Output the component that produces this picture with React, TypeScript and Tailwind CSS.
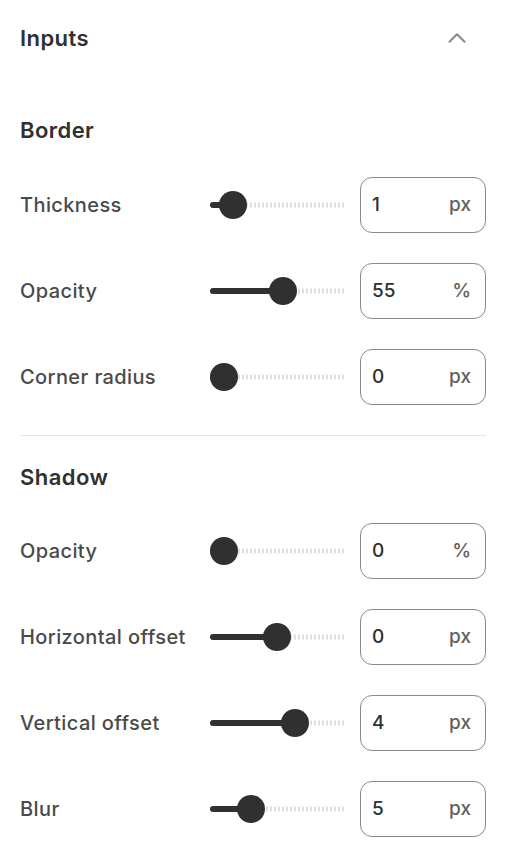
import { ChevronUp } from "lucide-react";

type Row = { label: string; value: string; unit: string; pos: number };

const border: Row[] = [
  { label: "Thickness", value: "1", unit: "px", pos: 1 / 12 },
  { label: "Opacity", value: "55", unit: "%", pos: 0.55 },
  { label: "Corner radius", value: "0", unit: "px", pos: 0 },
];

const shadow: Row[] = [
  { label: "Opacity", value: "0", unit: "%", pos: 0 },
  { label: "Horizontal offset", value: "0", unit: "px", pos: 0.49 },
  { label: "Vertical offset", value: "4", unit: "px", pos: 0.66 },
  { label: "Blur", value: "5", unit: "px", pos: 0.25 },
];

function Slider({ pos }: { pos: number }) {
  // thumb is 28px wide, so the travel is track width minus 28
  const left = `calc(${pos} * (100% - 28px))`;
  return (
    <div className="relative h-7 w-[136px]">
      <div className="absolute top-1/2 left-0 right-0 h-[5px] -translate-y-1/2 rounded-full bg-[repeating-linear-gradient(90deg,#dedede_0_2px,transparent_2px_4px)]" />
      <div
        className="absolute top-1/2 left-0 h-[6px] -translate-y-1/2 rounded-full bg-[#303030]"
        style={{ width: `calc(${left} + 14px)` }}
      />
      <div
        className="absolute top-0 h-7 w-7 rounded-full bg-[#303030]"
        style={{ left }}
      />
    </div>
  );
}

function SettingRow({ label, value, unit, pos }: Row) {
  return (
    <div className="flex items-center">
      <span className="w-[190px] text-[20px] font-medium tracking-[0.02em] text-[#4a4a4a]">
        {label}
      </span>
      <Slider pos={pos} />
      <div className="ml-[14px] flex h-[56px] w-[126px] items-center justify-between rounded-[12px] border border-[#8a8a8a] pl-[11px] pr-[14px] text-[19px] font-medium">
        <span className="text-[#303030]">{value}</span>
        <span className="text-[#616161]">{unit}</span>
      </div>
    </div>
  );
}

export default function App() {
  return (
    <div className="min-h-[858px] bg-white px-5 pt-[18px] font-['Inter',sans-serif]">
      <div className="flex h-10 items-center justify-between">
        <h2 className="text-[22px] font-semibold tracking-[0.02em] text-[#303030]">Inputs</h2>
        <ChevronUp className="mr-[14px] h-[30px] w-[30px] text-[#8a8a8a]" strokeWidth={1.6} />
      </div>

      <h3 className="mt-[57px] text-[22px] leading-[30px] font-semibold tracking-[0.02em] text-[#303030]">
        Border
      </h3>
      <div className="mt-[32px] flex flex-col gap-[30px]">
        {border.map((r) => (
          <SettingRow key={r.label} {...r} />
        ))}
      </div>

      <div className="mt-[30px] h-px bg-[#e6e6e6]" />

      <h3 className="mt-[26px] text-[22px] leading-[30px] font-semibold tracking-[0.02em] text-[#303030]">
        Shadow
      </h3>
      <div className="mt-[31px] flex flex-col gap-[30px]">
        {shadow.map((r) => (
          <SettingRow key={r.label} {...r} />
        ))}
      </div>
    </div>
  );
}
